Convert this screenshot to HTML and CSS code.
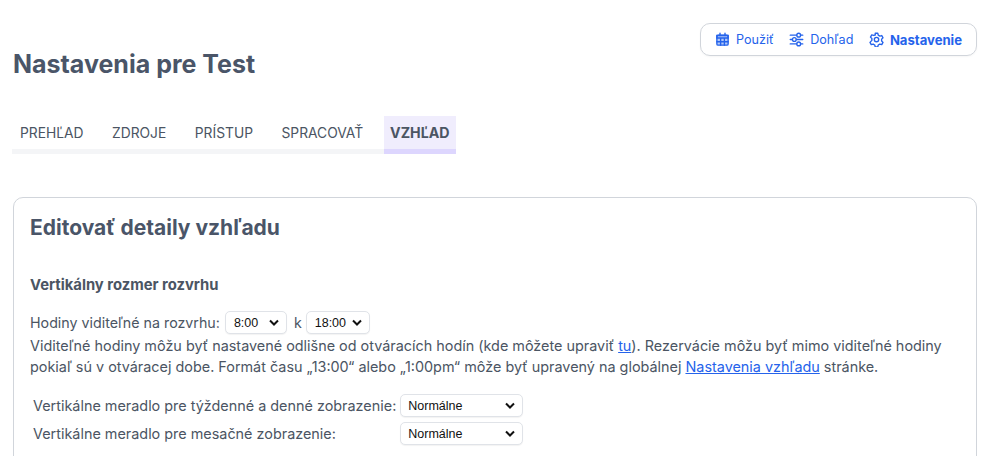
FILE: index.html
```html
<!DOCTYPE html>
<html lang="sk">
<head>
    <meta charset="UTF-8">
    <meta name="viewport" content="width=device-width, initial-scale=1.0">
    <title>Nastavenia pre Test</title>
    <link rel="stylesheet" href="styles.css">
</head>
<body>
    <div class="page">
        <div class="header">
            <h1>Nastavenia pre Test</h1>
            <nav class="modes">
                <a class="mode" href="#">
                    <svg viewBox="0 0 24 24" class="icon" fill="none" stroke="currentColor" stroke-width="2.2" stroke-linecap="round">
                        <rect x="3" y="5" width="18" height="16" rx="2" fill="currentColor" fill-opacity="0.35"/>
                        <path d="M8 2v4M16 2v4M3 5.5h18v4H3zM3 15.5h18M9 10v11M15 10v11"/>
                    </svg>
                    Použiť
                </a>
                <a class="mode" href="#">
                    <svg viewBox="0 0 24 24" class="icon" fill="none" stroke="currentColor" stroke-width="2.2" stroke-linecap="round">
                        <path d="M2 5h10M19 5h3M2 12h3M12 12h10M2 19h10M19 19h3"/>
                        <circle cx="15.5" cy="5" r="3"/>
                        <circle cx="8.5" cy="12" r="3"/>
                        <circle cx="15.5" cy="19" r="3"/>
                    </svg>
                    Dohľad
                </a>
                <a class="mode active" href="#">
                    <svg viewBox="0 0 24 24" class="icon" fill="none" stroke="currentColor" stroke-width="2.2" stroke-linejoin="round">
                        <path d="M10 2h4l.8 3 2.6 1.5 3-.8 2 3.5-2.2 2.2v3l2.2 2.2-2 3.5-3-.8-2.6 1.5-.8 3h-4l-.8-3-2.6-1.5-3 .8-2-3.5L4.6 13.4v-3L2.400 8.200l2-3.500 3 .8L10 4.800z"/>
                        <circle cx="12" cy="12" r="3.500"/>
                    </svg>
                    Nastavenie
                </a>
            </nav>
        </div>

        <div class="tabs">
            <a class="tab" href="#">PREHĽAD</a>
            <a class="tab" href="#">ZDROJE</a>
            <a class="tab" href="#">PRÍSTUP</a>
            <a class="tab" href="#">SPRACOVAŤ</a>
            <a class="tab active" href="#">VZHĽAD</a>
        </div>

        <div class="card">
            <h2>Editovať detaily vzhľadu</h2>
            <h3>Vertikálny rozmer rozvrhu</h3>
            <div class="hours">
                <span>Hodiny viditeľné na rozvrhu:</span>
                <select class="sel-from"><option>8:00</option></select>
                <span>k</span>
                <select class="sel-to"><option>18:00</option></select>
            </div>
            <p class="note">Viditeľné hodiny môžu byť nastavené odlišne od otváracích hodín (kde môžete upraviť <a href="#">tu</a>). Rezervácie môžu byť mimo viditeľné hodiny pokiaľ sú v otváracej dobe. Formát času „13:00“ alebo „1:00pm“ môže byť upravený na globálnej <a href="#">Nastavenia vzhľadu</a> stránke.</p>
            <table class="scales">
                <tr>
                    <td>Vertikálne meradlo pre týždenné a denné zobrazenie:</td>
                    <td><select class="sel-scale"><option>Normálne</option></select></td>
                </tr>
                <tr>
                    <td>Vertikálne meradlo pre mesačné zobrazenie:</td>
                    <td><select class="sel-scale"><option>Normálne</option></select></td>
                </tr>
            </table>
        </div>
    </div>
</body>
</html>
```

FILE: styles.css
```css
html, body {
    height: 456px;
    overflow: hidden;
}
body {
    margin: 0;
    font-family: Inter, "Liberation Sans", sans-serif;
    font-size: 14.4px;
    color: #4b5563;
    background: white;
}
.page {
    padding: 23px 7px 0 13px;
}
.header {
    display: flex;
    justify-content: space-between;
    align-items: flex-start;
    height: 93px;
}
h1 {
    margin: 26px 0 0;
    font-size: 25px;
    line-height: 30px;
    font-weight: 700;
    color: #4a5568;
}
.modes {
    display: flex;
    align-items: center;
    gap: 15.5px;
    height: 33px;
    padding: 0 14px;
    border: 1px solid #d1d5db;
    border-radius: 10px;
    box-sizing: border-box;
    width: 277px;
    box-shadow: 0 1px 2px rgba(0, 0, 0, 0.04);
}
.mode {
    display: flex;
    align-items: center;
    gap: 6px;
    font-size: 12.6px;
    color: #2563eb;
    text-decoration: none;
}
.mode.active {
    font-size: 13.1px;
    font-weight: 700;
}
.icon {
    width: 15px;
    height: 15px;
}
.tabs {
    display: inline-flex;
    height: 38px;
    margin-left: -1px;
    background: linear-gradient(to bottom, transparent 33px, #f4f5f7 33px);
    vertical-align: top;
}
.tab {
    display: flex;
    align-items: center;
    height: 33px;
    padding: 0 7px 0 8px;
    margin-right: 13.5px;
    font-size: 13.8px;
    color: #4b5563;
    text-decoration: none;
}
.tab.active {
    box-sizing: border-box;
    height: 38px;
    padding: 0 6.5px;
    margin-right: 0;
    font-size: 14.2px;
    font-weight: 700;
    background: #f0edfd;
    border-bottom: 5px solid #ddd6fe;
}
.card {
    margin-top: 43px;
    height: 300px;
    padding: 16px 16px 0;
    border: 1px solid #d1d5db;
    border-radius: 10px;
}
h2 {
    margin: 0;
    font-size: 21px;
    line-height: 28px;
    font-weight: 700;
    color: #4a5568;
}
h3 {
    margin: 33px 0 0;
    font-size: 14.8px;
    line-height: 20px;
    font-weight: 700;
}
.hours {
    display: flex;
    align-items: center;
    gap: 5px;
    margin-top: 15px;
    height: 25px;
    font-size: 14.25px;
}
select {
    appearance: none;
    box-sizing: border-box;
    font-family: "Liberation Sans", Arial, sans-serif;
    font-size: 12.5px;
    color: #111;
    height: 23px;
    padding: 0 0 0 8px;
    border: 1px solid #e0e3e8;
    border-radius: 5px;
    box-shadow: 0 1px 1px rgba(0, 0, 0, 0.05);
    background: white url("data:image/svg+xml,%3Csvg xmlns='http://www.w3.org/2000/svg' viewBox='0 0 10 7'%3E%3Cpath d='M1 1.500l4 4 4-4' fill='none' stroke='%23111' stroke-width='2'/%3E%3C/svg%3E") no-repeat right 7px center / 10px 7px;
}
.sel-from {
    width: 62px;
    margin-right: 2px;
}
.sel-to {
    width: 64px;
    margin-left: -1px;
}
.note {
    margin: 0;
    line-height: 21px;
}
.scales {
    margin-top: 17px;
    border-spacing: 0;
}
.scales td {
    padding: 0 3px 5px 3px;
}
.scales td + td {
    padding-left: 1px;
}
.sel-scale {
    display: block;
    width: 123px;
    padding-left: 7px;
}
a {
    color: #2563eb;
}
```
